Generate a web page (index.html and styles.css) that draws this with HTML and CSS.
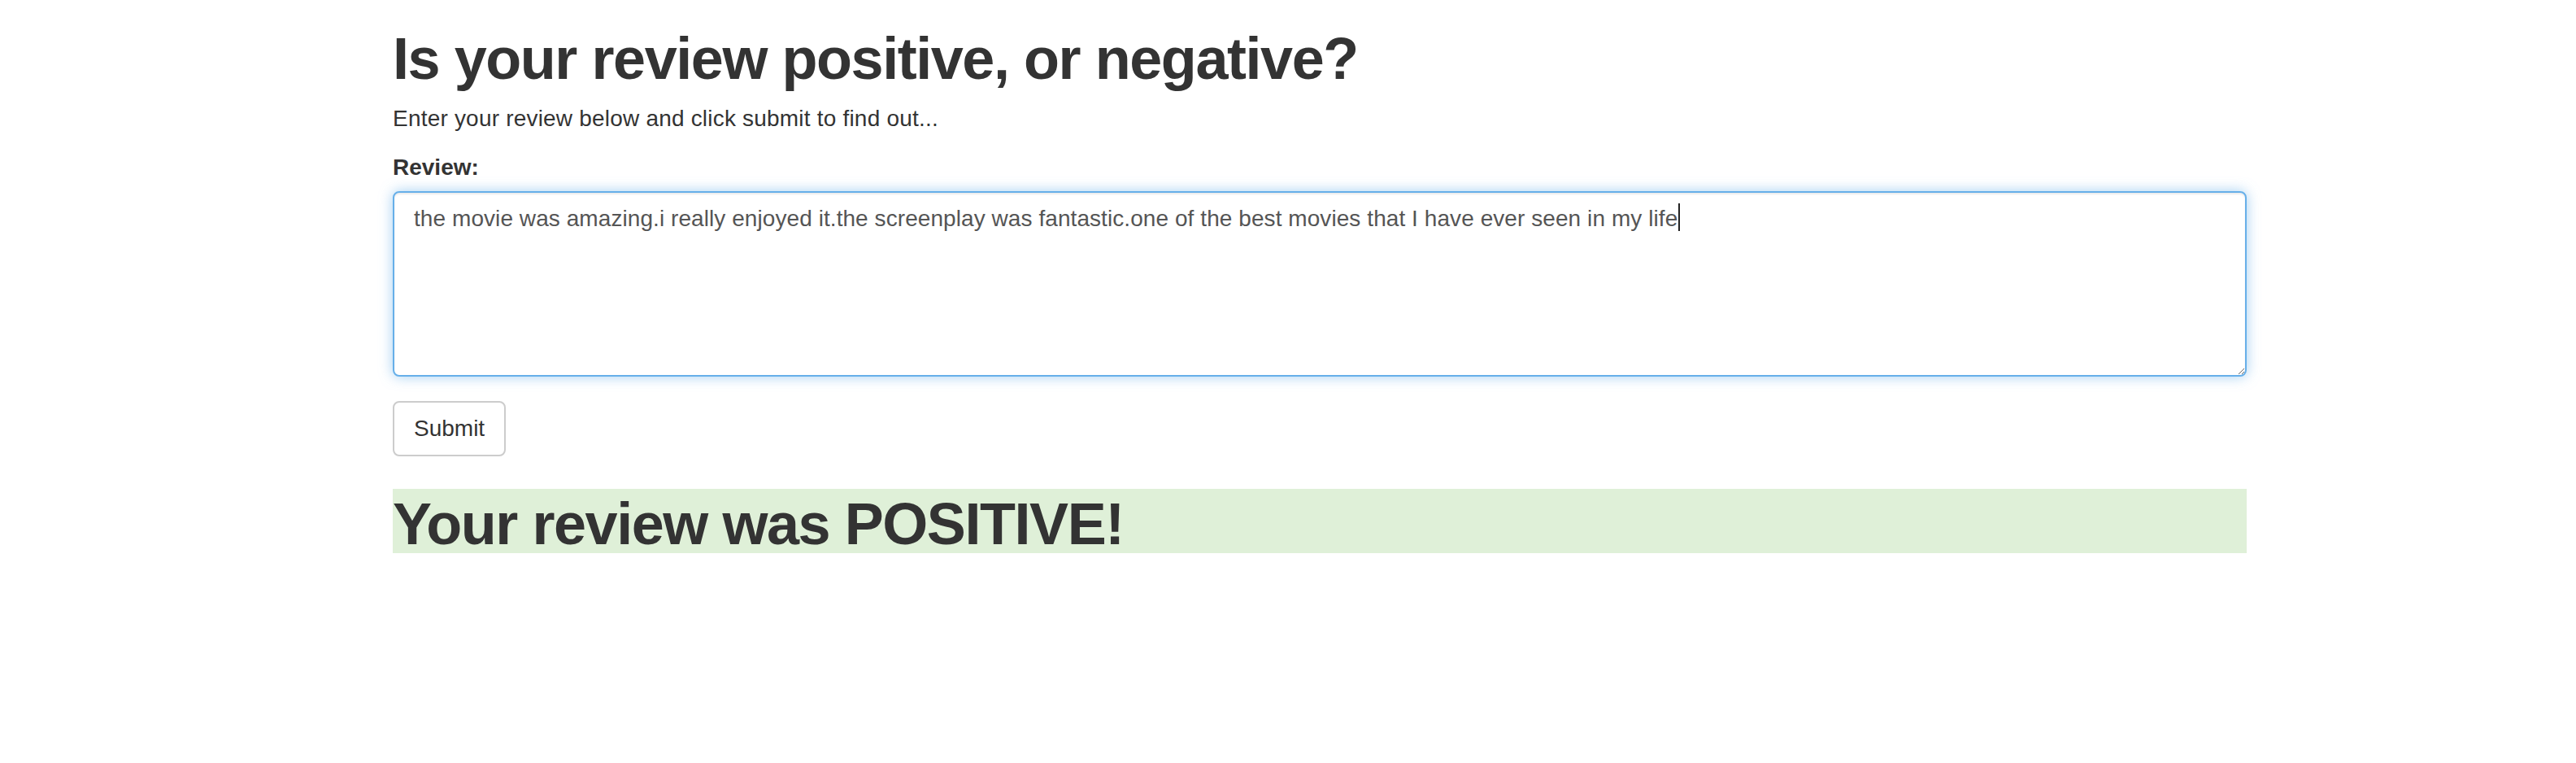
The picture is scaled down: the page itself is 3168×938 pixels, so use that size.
FILE: index.html
```html
<!DOCTYPE html>
<html lang="en">
<head>
<meta charset="utf-8">
<title>Review sentiment</title>
<link rel="stylesheet" href="styles.css">
</head>
<body>
<div class="container">
  <h1 class="title">Is your review positive, or negative?</h1>
  <p class="lead-text">Enter your review below and click submit to find out...</p>
  <form class="review-form">
    <div class="form-group">
      <label class="field-label">Review:</label>
      <div class="form-control review-box is-focused">the movie was amazing.i really enjoyed it.the screenplay was fantastic.one of the best movies that I have ever seen in my life<span class="caret"></span></div>
    </div>
    <button type="button" class="btn">Submit</button>
  </form>
  <h1 class="result">Your review was POSITIVE!</h1>
</div>
</body>
</html>
```
FILE: styles.css
```css
html, body {
  margin: 0;
  padding: 0;
  background: #fff;
}
body {
  font-family: "Liberation Sans", Arial, Helvetica, sans-serif;
  font-size: 28px;
  line-height: 40px;
  color: #333;
}
.container {
  width: 2280px;
  margin-left: 483px;
}
.title,
.result {
  font-size: 72px;
  font-weight: 700;
  letter-spacing: -1.45px;
  line-height: 72.2px;
  padding-top: 7px;
  margin: 0;
}
.title {
  margin-top: 29px;
  margin-bottom: 18px;
}
.lead-text {
  margin: 0 0 20px;
  letter-spacing: 0.2px;
}
.review-form {
  margin: 0;
}
.form-group {
  margin-bottom: 30px;
}
.field-label {
  display: inline-block;
  font-weight: 700;
  margin-bottom: 9px;
}
.form-control {
  display: block;
  box-sizing: border-box;
  width: 100%;
  height: 228px;
  padding: 12px 24px;
  border: 2px solid #ccc;
  border-radius: 8px;
  background: #fff;
  color: #555;
  font-size: 28px;
  line-height: 40px;
  letter-spacing: 0.07px;
  overflow: auto;
  resize: vertical;
  white-space: pre-wrap;
}
.form-control.is-focused {
  border-color: #66afe9;
  box-shadow: inset 0 2px 2px rgba(0, 0, 0, 0.075), 0 0 16px rgba(102, 175, 233, 0.6);
}
.caret {
  display: inline-block;
  width: 2px;
  height: 34px;
  margin-left: 1px;
  background: #222;
  vertical-align: -6px;
}
.btn {
  display: inline-block;
  box-sizing: border-box;
  height: 68px;
  padding: 12px 24px;
  border: 2px solid #ccc;
  border-radius: 8px;
  background: #fff;
  color: #333;
  font-family: inherit;
  font-size: 28px;
  line-height: 40px;
  cursor: pointer;
}
.result {
  margin-top: 40px;
  background: #dff0d8;
}
```
